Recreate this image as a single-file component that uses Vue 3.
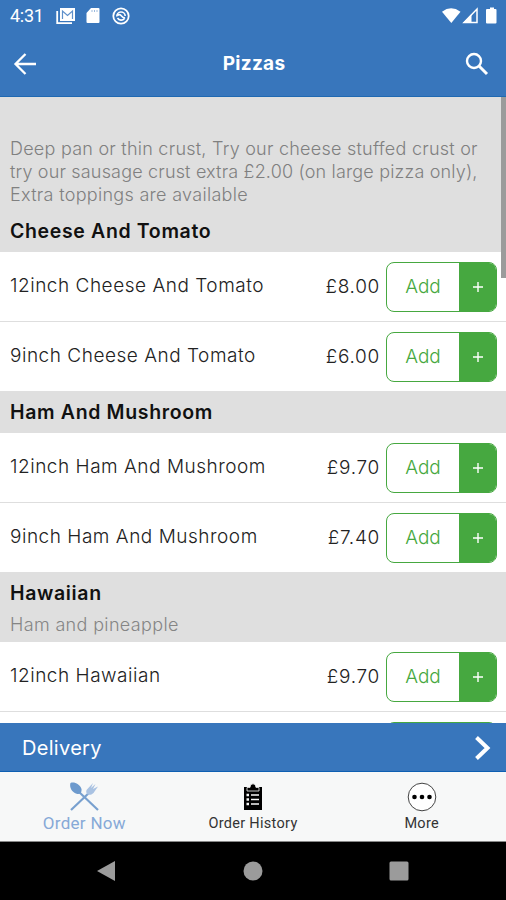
<template>
  <div class="screen">
    <header class="header">
      <div class="status">
        <span class="clock">4:31</span>
        <svg class="status-mail" width="20" height="18" viewBox="0 0 20 18">
          <path d="M1.2 4V16.2H16" fill="none" stroke="#fff" stroke-width="1.8" />
          <path d="M4 1H19V14H4Z" fill="#fff" />
          <path d="M6.5 12V4L11.5 8.5L16.5 4V12" fill="none" stroke="#5f90ca" stroke-width="1.2" />
        </svg>
        <svg class="status-card" width="14" height="17" viewBox="0 0 14 17">
          <path d="M5 1H12.5Q13.5 1 13.5 2V15Q13.5 16 12.5 16H1.5Q.5 16 .5 15V6Z" fill="#fff" />
          <path d="M6 3V5M8.5 3V5M11 3V5" stroke="#9dbbde" />
        </svg>
        <svg class="status-sync" width="18" height="18" viewBox="0 0 18 18">
          <circle cx="9" cy="9" r="7.7" fill="none" stroke="#fff" stroke-width="1.8" />
          <path d="M4.8 9.5A4.2 4.2 0 0 1 13.2 9M12.5 11.500A4.2 4.2 0 0 1 5.500 11M5.500 8.500Q7.500 6.500 9.500 9T13 10.500" fill="none" stroke="#fff" stroke-width="1.600" />
        </svg>
        <svg class="status-right" width="56" height="18" viewBox="0 0 56 18">
          <path d="M0 4.7Q9 -2.2 18.5 4.7L9.3 16Z" fill="#fff" />
          <path d="M35 2V15.5H22Z" fill="none" stroke="#fff" stroke-width="1.5" />
          <path d="M29.5 7V16H21Z" fill="#fff" />
          <path d="M46.5 2H48V.5H52V2H53.5Q54.5 2 54.5 3V15.5Q54.5 16.5 53.5 16.5H45Q44 16.5 44 15.5V3Q44 2 45 2Z" fill="#fff" />
        </svg>
      </div>
      <div class="nav">
        <svg width="24" height="24" viewBox="0 0 24 24">
          <path d="M23 12H2.5M12.5 2L2.5 12L12.5 22" fill="none" stroke="#fff" stroke-width="2.3" />
        </svg>
        <h1>Pizzas</h1>
        <svg width="24" height="24" viewBox="0 0 24 24">
          <circle cx="9" cy="9" r="7" fill="none" stroke="#fff" stroke-width="2.4" />
          <path d="M14 14L22 22" stroke="#fff" stroke-width="3" />
        </svg>
      </div>
    </header>

    <main class="menu">
      <p class="intro">
        <span v-for="line in intro" :key="line">{{ line }}</span>
      </p>
      <section v-for="group in groups" :key="group.name">
        <div class="group-head">
          <h2>{{ group.name }}</h2>
          <p v-if="group.note">{{ group.note }}</p>
        </div>
        <div class="item" v-for="(item, i) in group.items" :key="i">
          <span class="name">{{ item.name }}</span>
          <span class="price">{{ item.price }}</span>
          <button class="add">
            <span class="add-label">{{ item.name ? "Add" : "" }}</span>
            <span class="add-plus">
              <svg width="12" height="12" viewBox="0 0 12 12">
                <path d="M6 1V11M1 6H11" stroke="#fff" stroke-width="1.4" />
              </svg>
            </span>
          </button>
        </div>
      </section>
      <div class="scrollbar"></div>
    </main>

    <div class="delivery">
      <span>Delivery</span>
      <svg width="18" height="26" viewBox="0 0 18 26">
        <path d="M2.5 2.5L13.5 13L2.5 23.5" fill="none" stroke="#fff" stroke-width="4" />
      </svg>
    </div>

    <nav class="tabs">
      <div class="tab active">
        <svg width="32" height="30" viewBox="0 0 32 30">
          <path d="M10 9L30 28" stroke="#78a0cf" stroke-width="2.200" />
          <path d="M3 28L23 9" stroke="#78a0cf" stroke-width="2.200" />
          <path d="M2.500 1C6 -.5 12 2 13.500 7C14 10 12 12.500 9.500 12C4 11 1 5 2.500 1Z" fill="#6d9acd" />
          <path d="M18.500 8L25 1L23 6L27.500 2L25 7L30 4.500L25.500 11C23 13.500 20 13 19 12Q17.500 10.500 18.500 8Z" fill="#a9c2e2" />
        </svg>
        <span>Order Now</span>
      </div>
      <div class="tab">
        <svg width="20" height="28" viewBox="0 0 20 28">
          <path d="M1 4H19V27H1Z" fill="#000" />
          <path d="M4 8V4.500H7Q7 .8 10 .8Q13 .8 13 4.500H16V8Z" fill="#000" stroke="#f7f8f8" stroke-width=".8" />
          <path d="M3.500 12H6M3.500 16.500H6M3.500 21H6" stroke="#f7f8f8" stroke-width="2.400" />
          <path d="M8 12H16M8 16.500H16M8 21H16" stroke="#f7f8f8" stroke-width="1.400" />
        </svg>
        <span>Order History</span>
      </div>
      <div class="tab">
        <svg width="30" height="30" viewBox="0 0 30 30">
          <circle cx="15" cy="15" r="13.800" fill="#fff" stroke="#444" />
          <circle v-for="x in [7.5, 15, 22.5]" :key="x" :cx="x" cy="15" r="2.300" fill="#000" />
        </svg>
        <span>More</span>
      </div>
    </nav>

    <footer class="system">
      <svg width="20" height="22" viewBox="0 0 20 22">
        <path d="M19 1V21L1 11Z" fill="#9b9b9b" />
      </svg>
      <svg width="20" height="20" viewBox="0 0 20 20">
        <circle cx="10" cy="10" r="9.500" fill="#9b9b9b" />
      </svg>
      <svg width="20" height="20" viewBox="0 0 20 20">
        <rect x=".5" y=".5" width="19" height="19" rx="1.500" fill="#9b9b9b" />
      </svg>
    </footer>
  </div>
</template>

<script setup>
const intro = [
  "Deep pan or thin crust, Try our cheese stuffed crust or",
  "try our sausage crust extra £2.00 (on large pizza only),",
  "Extra toppings are available",
];

const groups = [
  {
    name: "Cheese And Tomato",
    items: [
      { name: "12inch Cheese And Tomato", price: "£8.00" },
      { name: "9inch Cheese And Tomato", price: "£6.00" },
    ],
  },
  {
    name: "Ham And Mushroom",
    items: [
      { name: "12inch Ham And Mushroom", price: "£9.70" },
      { name: "9inch Ham And Mushroom", price: "£7.40" },
    ],
  },
  {
    name: "Hawaiian",
    note: "Ham and pineapple",
    // the last row only peeks out above the delivery bar
    items: [{ name: "12inch Hawaiian", price: "£9.70" }, {}],
  },
];
</script>

<style>
body {
  margin: 0;
}
</style>

<style scoped>
* {
  box-sizing: border-box;
  margin: 0;
  padding: 0;
}
svg {
  display: block;
  flex: none;
}
.screen {
  width: 506px;
  height: 900px;
  display: flex;
  flex-direction: column;
  overflow: hidden;
  background: #fff;
  font-family: Inter, "Open Sans", sans-serif;
}
.header {
  height: 97px;
  flex: none;
  background: #3876bc;
  border-bottom: 1px solid #1f69b2;
  color: #fff;
}
.status {
  height: 31px;
  display: flex;
  align-items: center;
  padding: 0 8px 0 10px;
}
.clock {
  width: 46px;
  font: 18px/32px Roboto, sans-serif;
  letter-spacing: -0.3px;
}
.status-card {
  margin-left: 10px;
}
.status-sync {
  margin-left: 12px;
}
.status-right {
  margin-left: auto;
}
.nav {
  height: 65px;
  display: flex;
  align-items: center;
  justify-content: space-between;
  padding: 0 17px 0 13px;
}
.nav h1 {
  position: relative;
  left: 3px;
  font-size: 19px;
  font-weight: 700;
  letter-spacing: 0.3px;
}
.menu {
  position: relative;
  height: 626px;
  flex: none;
  overflow: hidden;
}
.intro {
  height: 113px;
  padding: 40px 10px 0;
  background: #dfdfdf;
  color: #808080;
  font-size: 18px;
  font-weight: 300;
  line-height: 23px;
  letter-spacing: 0.2px;
}
.intro span {
  display: block;
  white-space: nowrap;
}
.intro span:first-child {
  letter-spacing: 0.24px;
}
.intro span:nth-child(2) {
  letter-spacing: 0.17px;
}
.intro span:last-child {
  letter-spacing: 0.3px;
}
.group-head {
  padding: 0 10px;
  background: #dfdfdf;
}
.group-head h2 {
  height: 42px;
  font-size: 19.5px;
  font-weight: 600;
  line-height: 43px;
  letter-spacing: 0.65px;
  color: #111;
}
.group-head p {
  height: 28px;
  font-size: 18px;
  font-weight: 300;
  line-height: 21px;
  letter-spacing: 0.35px;
  color: #858585;
}
.item {
  height: 70px;
  display: flex;
  align-items: center;
  padding: 0 9px 0 10px;
  border-bottom: 1px solid #dedede;
  color: #222;
  font-size: 19px;
  font-weight: 300;
}
.item:last-child {
  height: 69px;
  border-bottom: 0;
}
.name {
  flex: 1;
  padding-bottom: 2px;
  white-space: nowrap;
  letter-spacing: 0.52px;
}
.price {
  margin-right: 6px;
  letter-spacing: 0.7px;
}
.add {
  width: 111px;
  height: 50px;
  display: flex;
  flex: none;
  overflow: hidden;
  border: 1px solid #46a840;
  border-radius: 8px;
  background: #fff;
  color: #46a840;
  font: inherit;
}
.add-label {
  flex: 1;
  line-height: 48px;
  text-align: center;
}
.add-plus {
  width: 37px;
  height: 48px;
  display: flex;
  align-items: center;
  justify-content: center;
  background: #46a840;
}
.scrollbar {
  position: absolute;
  top: 0;
  right: 0;
  width: 5px;
  height: 181px;
  background: #9b9b9b;
}
.delivery {
  height: 49px;
  flex: none;
  display: flex;
  align-items: center;
  justify-content: space-between;
  padding: 1px 14px 0 22px;
  background: #3876bc;
  border-bottom: 1px solid #0e5fb2;
  color: #fff;
  font-size: 20px;
  letter-spacing: 0.3px;
}
.tabs {
  height: 70px;
  flex: none;
  display: flex;
  background: #f7f8f8;
  border-bottom: 1px solid #888;
  font-family: Roboto, sans-serif;
}
.tab {
  flex: 1;
  display: flex;
  flex-direction: column;
  align-items: center;
  padding-top: 10px;
  color: #333;
  font-size: 14.5px;
  letter-spacing: 0.3px;
}
.tab svg {
  height: 30px;
}
.tab span {
  line-height: 24px;
}
.tab.active {
  color: #86a9d7;
  font-size: 17px;
}
.tab.active span {
  line-height: 22px;
}
.system {
  flex: 1;
  display: flex;
  align-items: center;
  justify-content: space-between;
  padding: 0 97px 0 96px;
  background: #000;
}
</style>
